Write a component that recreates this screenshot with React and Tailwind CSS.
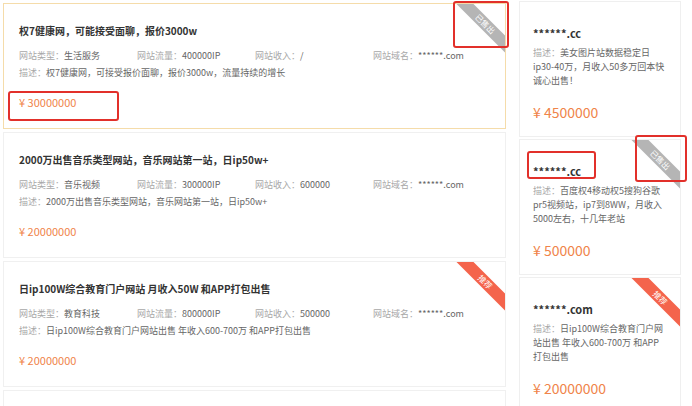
import React from "react";

const FONT = { fontFamily: '"Noto Sans CJK SC", "Noto Sans", sans-serif' };

const listings = [
  {
    title: "权7健康网，可能接受面聊，报价3000w",
    type: "生活服务",
    flow: "400000IP",
    income: "/",
    domain: "******.com",
    desc: "权7健康网，可接受报价面聊，报价3000w，流量持续的增长",
    price: "30000000",
    badge: "sold",
    active: true,
  },
  {
    title: "2000万出售音乐类型网站，音乐网站第一站，日ip50w+",
    type: "音乐视频",
    flow: "300000IP",
    income: "600000",
    domain: "******.com",
    desc: "2000万出售音乐类型网站，音乐网站第一站，日ip50w+",
    price: "20000000",
  },
  {
    title: "日ip100W综合教育门户网站 月收入50W 和APP打包出售",
    type: "教育科技",
    flow: "800000IP",
    income: "500000",
    domain: "******.com",
    desc: "日ip100W综合教育门户网站出售 年收入600-700万 和APP打包出售",
    price: "20000000",
    badge: "hot",
  },
];

const sideItems = [
  {
    domain: "******.cc",
    desc: "美女图片站数据稳定日ip30-40万，月收入50多万回本快诚心出售！",
    price: "4500000",
  },
  {
    domain: "******.cc",
    desc: "百度权4移动权5搜狗谷歌pr5视频站，ip7到8WW，月收入5000左右，十几年老站",
    price: "500000",
    badge: "sold",
    marked: true,
  },
  {
    domain: "******.com",
    desc: "日ip100W综合教育门户网站出售 年收入600-700万 和APP打包出售",
    price: "20000000",
    badge: "hot",
  },
];

function Ribbon({ kind }) {
  const sold = kind === "sold";
  return (
    <div className="absolute top-0 right-0 w-[56px] h-[56px] overflow-hidden pointer-events-none">
      <div
        className={`absolute left-[-4px] top-[14px] w-[80px] h-[12px] rotate-45 text-center text-white text-[8px] leading-[12px] ${
          sold ? "bg-[#b5b5b5]" : "bg-[#f4644c]"
        }`}
      >
        {sold ? "已售出" : "推荐"}
      </div>
    </div>
  );
}

function Info({ label, value }) {
  return (
    <div className="w-[118px] shrink-0 whitespace-nowrap">
      <span className="text-[#a8a8a8]">{label}：</span>
      <span className="text-[#666]">{value}</span>
    </div>
  );
}

function ListingCard({ item }) {
  return (
    <div
      className={`relative h-[126px] shrink-0 bg-white border px-[15px] pt-[20px] ${
        item.active ? "border-[#f5dcaa]" : "border-[#f0f0f0]"
      }`}
    >
      <h3 className="text-[10px] leading-[14px] font-bold text-[#333] whitespace-nowrap">
        {item.title}
      </h3>
      <div className="flex mt-[11px] text-[9px] leading-[14px]">
        <Info label="网站类型" value={item.type} />
        <Info label="网站流量" value={item.flow} />
        <Info label="网站收入" value={item.income} />
        <Info label="网站域名" value={item.domain} />
      </div>
      <p className="mt-[3px] text-[9px] leading-[14px] whitespace-nowrap">
        <span className="text-[#a8a8a8]">描述：</span>
        <span className="text-[#666]">{item.desc}</span>
      </p>
      <div className="mt-[14px] text-[11px] leading-[16px] text-[#f0844a]">¥ {item.price}</div>
      {item.badge && <Ribbon kind={item.badge} />}
      {item.active && (
        <>
          <div className="absolute left-[4px] top-[87px] w-[111px] h-[30px] border-2 border-[#e2302a] rounded-[3px]" />
          <div className="absolute right-[-4px] top-[-3px] w-[56px] h-[47px] border-2 border-[#e2302a] rounded-[3px]" />
        </>
      )}
    </div>
  );
}

function SideCard({ item }) {
  return (
    <div className="relative h-[136px] shrink-0 bg-white border border-[#efefef] pl-[13px] pt-[23px]">
      <h4 className="text-[11px] leading-[16px] font-bold text-[#333]">{item.domain}</h4>
      <p className="mt-[5px] w-[134px] text-[9px] leading-[14px] text-[#666]">
        <span className="text-[#a8a8a8]">描述：</span>
        {item.desc}
      </p>
      <div className="absolute left-[13px] top-[100px] text-[14px] leading-[20px] text-[#f0844a]">
        ¥ {item.price}
      </div>
      {item.badge && <Ribbon kind={item.badge} />}
      {item.marked && (
        <>
          <div className="absolute left-[7px] top-[11px] w-[69px] h-[28px] border-2 border-[#e2302a] rounded-[3px]" />
          <div className="absolute right-[-7px] top-[-5px] w-[52px] h-[47px] border-2 border-[#e2302a] rounded-[3px]" />
        </>
      )}
    </div>
  );
}

export default function App() {
  return (
    <div className="w-[692px] h-[406px] overflow-hidden bg-white flex pl-[3px] pt-[3px]" style={FONT}>
      <div className="w-[503px] shrink-0 flex flex-col gap-[3px]">
        {listings.map((item, i) => (
          <ListingCard key={i} item={item} />
        ))}
        <div className="h-[60px] shrink-0 bg-white border border-[#f0f0f0]" />
      </div>
      <div className="w-[162px] shrink-0 ml-[13px] mt-[-2px] flex flex-col gap-[2px]">
        {sideItems.map((item, i) => (
          <SideCard key={i} item={item} />
        ))}
      </div>
    </div>
  );
}
